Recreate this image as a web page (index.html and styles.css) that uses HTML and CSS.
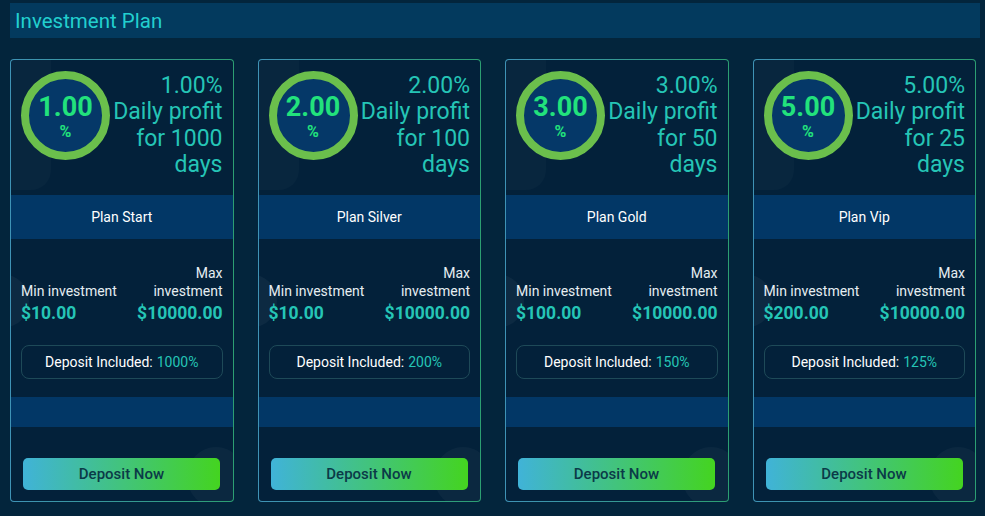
FILE: index.html
```html
<!DOCTYPE html>
<html>
<head>
<meta charset="utf-8">
<link rel="stylesheet" href="styles.css">
</head>
<body>
<div class="page">
  <div class="header"><h1 class="title">Investment Plan</h1></div>
  <div class="plans">
    <div class="card">
      <span class="deco deco-tl"></span><span class="deco deco-ml"></span><span class="deco deco-br"></span>
      <div class="top">
        <div class="ring"><div class="ring-inner"><span class="rate">1.00</span><span class="pct">%</span></div></div>
        <div class="profit">1.00%<br>Daily profit<br>for 1000<br>days</div>
      </div>
      <div class="band">Plan Start</div>
      <div class="mid">
        <div class="limits">
          <div class="limit"><div class="label">Min investment</div><div class="value">$10.00</div></div>
          <div class="limit right"><div class="label">Max<br>investment</div><div class="value">$10000.00</div></div>
        </div>
        <div class="included">Deposit Included: <span class="inc-val">1000%</span></div>
      </div>
      <div class="bar"></div>
      <div class="bottom"><button class="btn">Deposit Now</button></div>
    </div>
    <div class="card">
      <span class="deco deco-tl"></span><span class="deco deco-ml"></span><span class="deco deco-br"></span>
      <div class="top">
        <div class="ring"><div class="ring-inner"><span class="rate">2.00</span><span class="pct">%</span></div></div>
        <div class="profit">2.00%<br>Daily profit<br>for 100<br>days</div>
      </div>
      <div class="band">Plan Silver</div>
      <div class="mid">
        <div class="limits">
          <div class="limit"><div class="label">Min investment</div><div class="value">$10.00</div></div>
          <div class="limit right"><div class="label">Max<br>investment</div><div class="value">$10000.00</div></div>
        </div>
        <div class="included">Deposit Included: <span class="inc-val">200%</span></div>
      </div>
      <div class="bar"></div>
      <div class="bottom"><button class="btn">Deposit Now</button></div>
    </div>
    <div class="card">
      <span class="deco deco-tl"></span><span class="deco deco-ml"></span><span class="deco deco-br"></span>
      <div class="top">
        <div class="ring"><div class="ring-inner"><span class="rate">3.00</span><span class="pct">%</span></div></div>
        <div class="profit">3.00%<br>Daily profit<br>for 50<br>days</div>
      </div>
      <div class="band">Plan Gold</div>
      <div class="mid">
        <div class="limits">
          <div class="limit"><div class="label">Min investment</div><div class="value">$100.00</div></div>
          <div class="limit right"><div class="label">Max<br>investment</div><div class="value">$10000.00</div></div>
        </div>
        <div class="included">Deposit Included: <span class="inc-val">150%</span></div>
      </div>
      <div class="bar"></div>
      <div class="bottom"><button class="btn">Deposit Now</button></div>
    </div>
    <div class="card">
      <span class="deco deco-tl"></span><span class="deco deco-ml"></span><span class="deco deco-br"></span>
      <div class="top">
        <div class="ring"><div class="ring-inner"><span class="rate">5.00</span><span class="pct">%</span></div></div>
        <div class="profit">5.00%<br>Daily profit<br>for 25<br>days</div>
      </div>
      <div class="band">Plan Vip</div>
      <div class="mid">
        <div class="limits">
          <div class="limit"><div class="label">Min investment</div><div class="value">$200.00</div></div>
          <div class="limit right"><div class="label">Max<br>investment</div><div class="value">$10000.00</div></div>
        </div>
        <div class="included">Deposit Included: <span class="inc-val">125%</span></div>
      </div>
      <div class="bar"></div>
      <div class="bottom"><button class="btn">Deposit Now</button></div>
    </div>
  </div>
</div>
</body>
</html>
```
FILE: styles.css
```css
* { box-sizing: border-box; }
html, body { margin: 0; padding: 0; }
body {
  background: #03253c;
  font-family: Roboto, "Noto Sans", sans-serif;
  color: #ffffff;
  width: 985px;
  height: 516px;
  overflow: hidden;
}
.page { padding: 3px 0 0 10px; }
.header {
  width: 970px;
  height: 35px;
  background: #033a5e;
  display: flex;
  align-items: center;
  padding-left: 5px;
}
.title {
  margin: 0;
  font-size: 20.5px;
  font-weight: 400;
  color: #22cfcf;
}
.plans {
  margin-top: 21px;
  width: 966px;
  display: grid;
  grid-template-columns: repeat(4, 1fr);
  column-gap: 24px;
}
.card {
  position: relative;
  overflow: hidden;
  height: 443px;
  border: 1px solid transparent;
  border-radius: 4px;
  background:
    linear-gradient(#03213a, #03213a) padding-box,
    linear-gradient(90deg, #3f93b6, #2c9f72) border-box;
  display: flex;
  flex-direction: column;
}
.deco { position: absolute; pointer-events: none; }
.deco-tl {
  left: 0; top: 0; width: 40px; height: 130px;
  background: rgba(255,255,255,0.025);
  border-radius: 0 0 20px 0;
}
.deco-ml {
  left: -30px; top: 215px; width: 48px; height: 52px;
  border-radius: 50%;
  background: rgba(255,255,255,0.045);
}
.deco-br {
  right: -12px; top: 387px; width: 58px; height: 60px;
  border-radius: 50%;
  background: rgba(255,255,255,0.035);
}
.top {
  height: 135px;
  display: flex;
  justify-content: space-between;
  align-items: flex-start;
  padding: 11px 10px 0 10px;
  position: relative;
}
.ring {
  width: 89px;
  height: 89px;
  border-radius: 50%;
  border: 8px solid #6bbf4c;
  background: #053868;
  flex: none;
}
.ring-inner {
  height: 100%;
  display: flex;
  flex-direction: column;
  align-items: center;
  justify-content: center;
  padding-top: 2px;
}
.rate {
  font-size: 27px;
  font-weight: 700;
  color: #22e27c;
  line-height: 30px;
}
.pct {
  font-size: 16px;
  font-weight: 700;
  color: #22e27c;
  line-height: 20px;
}
.profit {
  text-align: right;
  font-size: 23px;
  line-height: 26.3px;
  color: #25c5b6;
  margin-top: 2px;
  white-space: nowrap;
}
.band {
  height: 44px;
  background: #023766;
  display: flex;
  align-items: center;
  justify-content: center;
  font-size: 14px;
  color: #ffffff;
}
.mid {
  height: 158px;
  padding: 25px 10px 0 10px;
  position: relative;
}
.limits {
  display: flex;
  justify-content: space-between;
  align-items: flex-end;
}
.limit.right { text-align: right; }
.label {
  font-size: 14px;
  line-height: 18px;
  color: #e6eef2;
}
.value {
  font-size: 17.5px;
  font-weight: 700;
  line-height: 22px;
  margin-top: 2px;
  color: #25c5b6;
}
.included {
  margin-top: 21px;
  height: 34px;
  border: 1px solid #1e4a58;
  border-radius: 8px;
  display: flex;
  align-items: center;
  justify-content: center;
  font-size: 14px;
  color: #ffffff;
}
.inc-val { color: #25c5b6; margin-left: 4px; }
.bar {
  height: 30px;
  background: #023766;
}
.bottom {
  flex: 1;
  padding: 31px 12px 0 12px;
  position: relative;
}
.btn {
  display: block;
  width: 197px;
  height: 32px;
  border: none;
  border-radius: 5px;
  background: linear-gradient(90deg, #40b3d8, #44d420);
  color: #0b3a48;
  font-family: Roboto, "Noto Sans", sans-serif;
  font-size: 15px;
  font-weight: 500;
  padding: 0;
}
```
